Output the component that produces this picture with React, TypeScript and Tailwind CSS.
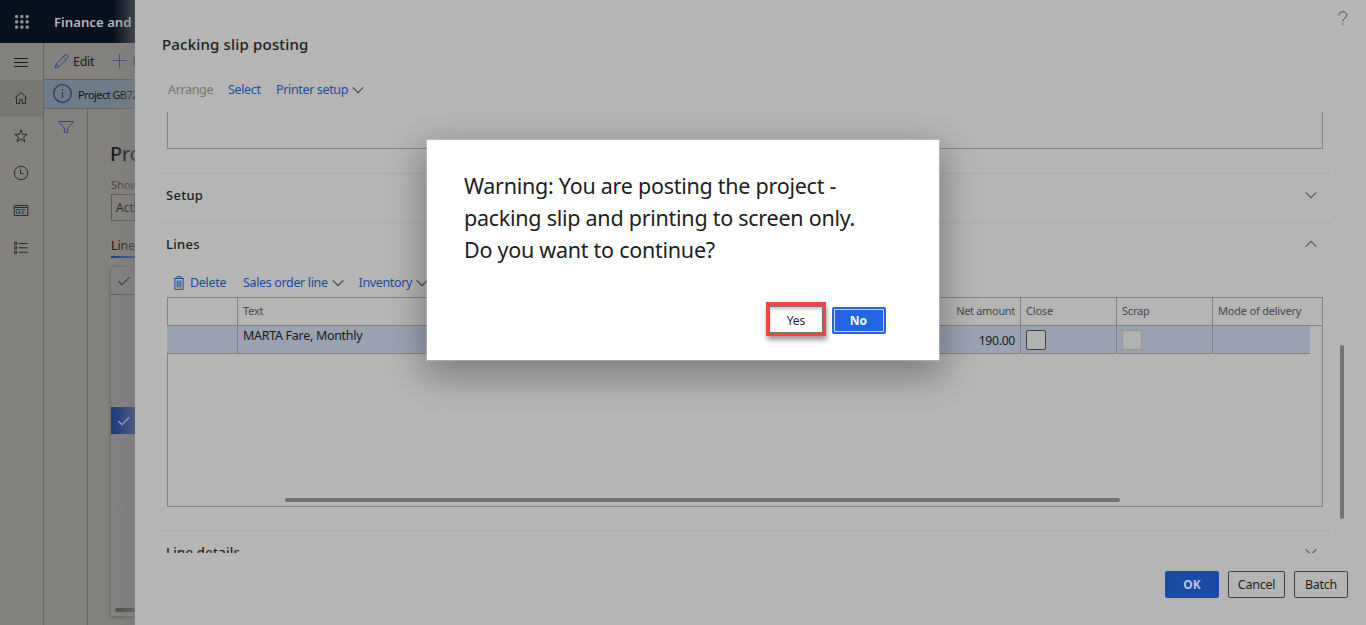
import React from "react";

type IconProps = { className?: string };

function Chevron({ className = "", up = false }: IconProps & { up?: boolean }) {
  return (
    <svg viewBox="0 0 12 12" className={`h-3 w-3 shrink-0 ${className}`} fill="none" stroke="currentColor" strokeWidth="1.1">
      {up ? <path d="M0.7 8.7 6 3.4l5.3 5.3" /> : <path d="M0.7 3.3 6 8.6l5.3-5.3" />}
    </svg>
  );
}

function Check({ className = "" }: IconProps) {
  return (
    <svg viewBox="0 0 12 10" className={`h-[10px] w-3 shrink-0 ${className}`} fill="none" stroke="currentColor" strokeWidth="1.2">
      <path d="M0.5 5.2 4 8.6 11.4 1.2" />
    </svg>
  );
}

function Waffle() {
  return (
    <svg viewBox="0 0 14 14" className="h-[14px] w-[14px]" fill="#929498">
      {[0, 5.3, 10.6].map((y) => [0, 5.3, 10.6].map((x) => <rect key={`${x}-${y}`} x={x} y={y} width="3.2" height="3.2" rx="1.1" />))}
    </svg>
  );
}

function RailIcon({ children, active = false }: { children: React.ReactNode; active?: boolean }) {
  return (
    <div className={`flex h-[37.5px] w-full shrink-0 items-center justify-center pr-px text-[#262b2e] ${active ? "bg-[#797774]" : ""}`}>
      <svg viewBox="0 0 16 16" className="h-4 w-4" fill="none" stroke="currentColor" strokeWidth="1">
        {children}
      </svg>
    </div>
  );
}

function Rail() {
  return (
    <div className="flex w-[44px] shrink-0 flex-col border-r border-[#666461]">
      <div className="flex h-[36.5px] items-center justify-center pt-[4px] pr-px text-[#1c1c1c]">
        <svg viewBox="0 0 14 10" className="h-[10px] w-[14px]" stroke="currentColor" strokeWidth="1">
          <path d="M0 .5h14M0 4.5h14M0 8.5h14" />
        </svg>
      </div>
      <RailIcon active>
        <path d="M1.8 8.3 8 2.4l6.2 5.9M3.5 7v6.5h3.2V9.6h2.6v3.9h3.2V7" />
      </RailIcon>
      <RailIcon>
        <path d="m8 1.8 1.6 4.5h4.6l-3.7 2.9 1.4 4.6L8 11l-3.9 2.8 1.4-4.6-3.7-2.9h4.6z" />
      </RailIcon>
      <RailIcon>
        <circle cx="8" cy="8" r="6.7" />
        <path d="M7.5 4v4.5h3" />
      </RailIcon>
      <RailIcon>
        <path d="M1.2 2.5h13.6v10H1.2zM1.2 4.5h13.6" />
        <path d="M3.3 6.6h3.4v3.6H3.3zM8.5 6.6h3.8M8.5 8.5h2.2M8.5 10.4h2.8" stroke="#203f52" />
      </RailIcon>
      <RailIcon>
        <path d="M1.5 2.3h2.2v2.2H1.5zM1.5 6.7h2.2v2.2H1.5zM1.5 11.1h2.2v2.2H1.5z" />
        <path d="M6 3.5h8.7M6 7.8h8.7M6 12.3h8.7" />
      </RailIcon>
    </div>
  );
}

function Workspace() {
  return (
    <div className="flex h-full w-[135px] flex-col overflow-hidden bg-[#83817e] whitespace-nowrap">
      <div className="flex h-[43px] shrink-0 items-center bg-[#07101f]">
        <div className="flex w-[43px] justify-center">
          <Waffle />
        </div>
        <span className="mt-[2px] ml-[11px] text-[13.2px] font-semibold text-[#b4b5b8]">Finance and</span>
      </div>
      <div className="flex min-h-0 flex-1">
        <Rail />
        <div className="flex min-w-0 flex-1 flex-col">
          <div className="flex h-[37px] shrink-0 items-center border-b border-[#666461] pt-px pl-[10px]">
            <svg viewBox="0 0 16 16" className="mb-px h-[15px] w-[15px] shrink-0" fill="none" stroke="#2c4189" strokeWidth="1">
              <path d="M1.2 14.8 2.4 10.7 11.7 1.4a1.3 1.3 0 0 1 1.9 0l1 1a1.3 1.3 0 0 1 0 1.9L5.3 13.6zM10 3.2 12.8 6M2.5 10.7l2.8 2.9" />
            </svg>
            <span className="mt-[2px] ml-[4px] text-[12.5px] tracking-[-0.3px] text-[#1b1b1b]">Edit</span>
            <svg viewBox="0 0 14 14" className="mb-px ml-[19px] h-[14px] w-[14px] shrink-0" stroke="#34468a" strokeWidth="1">
              <path d="M6.5 0v14M0 6.5h14" />
            </svg>
            <span className="mt-[2px] ml-[5px] text-[12.5px] text-[#3c3c3c]">New</span>
          </div>
          <div className="flex h-[29px] shrink-0 items-center border-b border-[#666461] bg-[#6e7b88] pl-[9px]">
            <svg viewBox="0 0 20 20" className="h-5 w-5 shrink-0" fill="none" stroke="#1c3f72" strokeWidth="1.2">
              <circle cx="9.5" cy="9.5" r="8.8" />
              <path d="M9.5 8v6M9.5 5v1.5" />
            </svg>
            <span className="mt-[2px] ml-[5px] text-[11px] tracking-[-0.55px] text-[#151515]">Project GB72</span>
          </div>
          <div className="flex min-h-0 flex-1">
            <div className="flex w-[44px] shrink-0 justify-center border-r border-[#666461] pt-[11px]">
              <svg viewBox="0 0 16 14" className="h-[14px] w-4" fill="none" stroke="#2c4189" strokeWidth="1">
                <path d="M1 1.5h14v1L9.7 8v4.6H6.4V8L1 2.5z" />
              </svg>
            </div>
            <div className="flex min-w-0 flex-1 flex-col pl-[23px]">
              <div className="mt-[29px] -ml-px h-[32px] text-[20px] leading-8 font-medium tracking-[-0.4px] text-[#1a1a1a]">Projects</div>
              <div className="mt-[7px] text-[11px] leading-4 tracking-[-0.1px] text-[#3f3e3d]">Show</div>
              <div className="mt-px flex h-[27px] items-center border border-[#5d5b59] pt-px pl-[4px] text-[12px] text-[#1b1b1b]">Active</div>
              <div className="mt-[15px] h-[22px] border-b-2 border-[#20418a] text-[12.3px] leading-[19px] text-[#161616]">Lines</div>
              <div className="mt-[9px] flex h-[349px] flex-col bg-[#838080] shadow-[0_1px_4px_rgba(0,0,0,0.3)]">
                <div className="flex h-[28px] shrink-0 items-center border-b border-[#605e5c] pl-[7px] text-[#333]">
                  <Check />
                </div>
                <div className="mt-[112px] flex h-[27px] shrink-0 items-center bg-[#1b3b80] pl-[7px] text-[#aab0bd]">
                  <Check />
                </div>
                <div className="mt-auto mb-[4px] ml-[4px] h-[4px] rounded-full bg-[#504e4c]" />
              </div>
            </div>
          </div>
        </div>
      </div>
    </div>
  );
}

function MenuLabel({ label, className = "" }: { label: string; className?: string }) {
  return (
    <span className={`flex items-center ${className}`}>
      <span className="text-[12.5px] tracking-[-0.35px] text-[#1f49a0]">{label}</span>
      <Chevron className="mb-px ml-[4px] text-[#444]" />
    </span>
  );
}

function Section({ title, open = false }: { title: string; open?: boolean }) {
  return (
    <div className="ml-[26px] flex h-[49px] w-[1169px] shrink-0 justify-between border-t border-[#aaaaaa] pr-[13px] pl-[5px]">
      <span className="pt-[11px] text-[13px] leading-[20px] font-medium tracking-[0.28px] text-[#202020]">{title}</span>
      <Chevron up={open} className="mt-[15px] text-[#555]" />
    </div>
  );
}

const headCell = "flex items-center border-r border-[#858381] px-[5px]";
const cell = "flex border-r border-[#858381] px-[5px]";

function LinesGrid() {
  return (
    <div className="mx-[32px] flex h-[210px] w-[1156px] shrink-0 flex-col border border-[#858381]">
      <div className="grid h-[28px] shrink-0 grid-cols-[70px_698px_85px_96px_96px_1fr] border-b border-[#858381] text-[11px] tracking-[-0.2px] text-[#474747]">
        <div className={headCell} />
        <div className={headCell}>Text</div>
        <div className={`${headCell} justify-end pl-0 tracking-[-0.32px] whitespace-nowrap`}>Net amount</div>
        <div className={headCell}>Close</div>
        <div className={headCell}>Scrap</div>
        <div className="flex items-center px-[5px]">Mode of delivery</div>
      </div>
      <div className="mr-[12px] -ml-px grid h-[28px] shrink-0 grid-cols-[71px_698px_85px_96px_96px_1fr] border-b border-[#858381] bg-[#9ba2b3] text-[#1a1a1a]">
        <div className={cell} />
        <div className={`${cell} text-[12.5px] leading-[20px] tracking-[-0.3px]`}>MARTA Fare, Monthly</div>
        <div className={`${cell} items-center justify-end pt-[4px] text-[12.2px] tracking-[-0.3px]`}>190.00</div>
        <div className={`${cell} items-center`}>
          <span className="h-5 w-5 rounded-[2px] border border-[#3d3d3d] bg-[#b2b2b2]" />
        </div>
        <div className={`${cell} items-center`}>
          <span className="h-5 w-5 rounded-[2px] border border-[#969492] bg-[#b2b2b2]" />
        </div>
        <div />
      </div>
      <div className="mt-auto mb-[4px] ml-[117px] h-[4px] w-[835px] rounded-full bg-[#73716f]" />
    </div>
  );
}

function Drawer() {
  return (
    <div className="flex h-full min-w-0 flex-1 flex-col bg-[#b5b5b5] whitespace-nowrap">
      <div className="flex h-[76px] shrink-0 justify-between pr-[18px] pl-[27px]">
        <h1 className="pt-[32px] text-[15px] leading-[24px] font-medium tracking-[0.18px] text-[#202020]">Packing slip posting</h1>
        <svg viewBox="0 0 10 14" className="mt-[11px] h-[14px] w-[10px]" fill="none" stroke="#4a4a4a" strokeWidth="1">
          <path d="M1 4.2C1 2 2.6.7 4.8.7S8.8 2 8.8 4c0 3-4 3.2-4 6.4M4.8 12.4v1.3" />
        </svg>
      </div>
      <div className="flex h-[36px] shrink-0 items-start pt-[4px] pl-[33px] text-[12.5px] leading-[20px] tracking-[-0.35px]">
        <span className="w-[60px] text-[#777]">Arrange</span>
        <span className="w-[48px] text-[#1f49a0]">Select</span>
        <MenuLabel label="Printer setup" />
      </div>
      <div className="flex h-[441px] shrink-0">
        <div className="flex min-w-0 flex-1 flex-col overflow-hidden">
          <div className="mb-[24px] ml-[32px] h-[37px] w-[1156px] shrink-0 border-x border-b border-[#858381]" />
          <Section title="Setup" />
          <Section title="Lines" open />
          <div className="flex h-[26px] shrink-0 items-center pb-[2px] pl-[38px]">
            <svg viewBox="0 0 12 14" className="mr-[5px] mb-px h-[14px] w-3" fill="none" stroke="#1f49a0" strokeWidth="1">
              <path d="M1 2.5h10M4 2.5v-2h4v2M1.9 2.5v10.8h8.2V2.5M4.2 4.5v7M6 4.5v7M7.8 4.5v7" />
            </svg>
            <span className="w-[53px] text-[12.5px] tracking-[-0.3px] text-[#1f49a0]">Delete</span>
            <MenuLabel label="Sales order line" className="w-[115.5px]" />
            <MenuLabel label="Inventory" />
          </div>
          <LinesGrid />
          <div className="h-[23px] shrink-0" />
          <Section title="Line details" />
        </div>
        <div className="w-[31px] shrink-0 pt-[233px] pl-[5px]">
          <div className="h-[174px] w-[4px] rounded-full bg-[#73716f]" />
        </div>
      </div>
      <div className="flex justify-end gap-[9px] pt-[18px] pr-[18px] text-[12.5px] tracking-[-0.25px] text-[#1c1c1c]">
        <button className="h-[27px] w-[54px] rounded-[2px] bg-[#1b4ba6] text-[12px] font-bold tracking-normal text-[#bac4d8]">OK</button>
        <button className="h-[27px] w-[57px] rounded-[2px] border border-[#3f3f3f] pt-[2px]">Cancel</button>
        <button className="h-[27px] w-[54px] rounded-[2px] border border-[#3f3f3f] pt-[2px]">Batch</button>
      </div>
    </div>
  );
}

function WarningDialog() {
  return (
    <div className="absolute top-[140px] left-[427px] flex h-[220px] w-[512px] flex-col bg-white shadow-[0_0_1px_1px_rgba(200,200,200,0.5),0_12px_34px_3px_rgba(0,0,0,0.33)]">
      <p className="h-[162px] pt-[30px] pl-[37px] text-[21.5px] leading-8 tracking-[-0.26px] whitespace-nowrap text-[#212121]">
        Warning: You are posting the project -<br />
        packing slip and printing to screen only.<br />
        Do you want to continue?
      </p>
      <div className="flex items-start pl-[339px] text-[12px]">
        <div className="h-[34px] w-[60px] border-[3px] border-[#fb4144] shadow-[1px_4px_5px_rgba(0,0,0,0.4)]">
          <button className="h-[28px] w-[54px] border border-t-2 border-[#777] bg-white pt-[2px] text-[#252525] shadow-[inset_0_2px_3px_rgba(0,0,0,0.25)]">Yes</button>
        </div>
        <button className="mt-[5px] ml-[5.5px] flex h-[27px] w-[54px] rounded-[2px] bg-[#2266e3] p-[2px] font-bold text-white">
          <span className="flex h-full w-full items-center justify-center border border-[#c4d6f8]">No</span>
        </button>
      </div>
    </div>
  );
}

export default function App() {
  return (
    <div className="relative flex h-[625px] w-[1366px] overflow-hidden bg-[#b5b5b5] font-['Noto_Sans',sans-serif]">
      <Workspace />
      <div className="absolute top-0 left-[113px] h-full w-[22px] bg-linear-to-r from-[#7d7b7a]/0 to-[#7d7b7a]/50" />
      <Drawer />
      <WarningDialog />
    </div>
  );
}
